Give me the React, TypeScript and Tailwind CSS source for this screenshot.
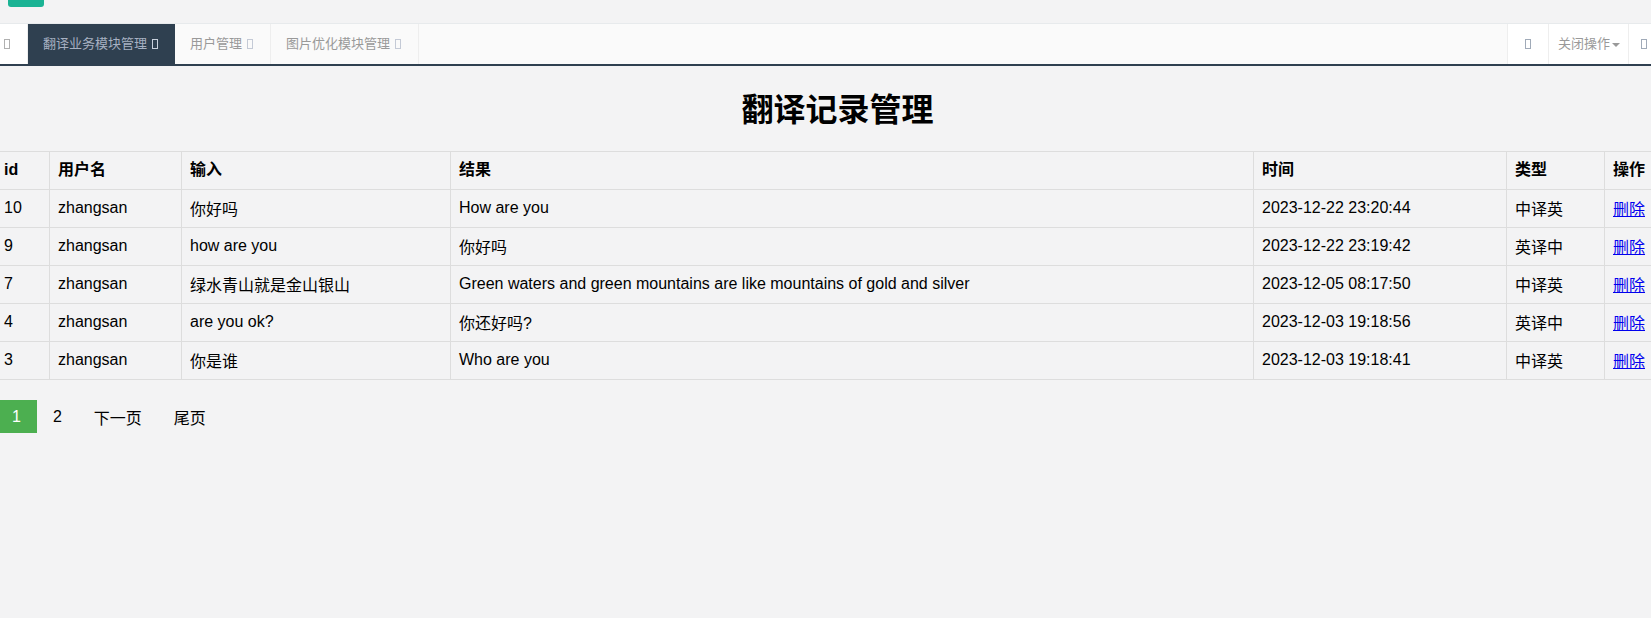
import React from 'react';

const rows = [
  { id: '10', user: 'zhangsan', input: '你好吗', result: 'How are you', time: '2023-12-22 23:20:44', type: '中译英' },
  { id: '9', user: 'zhangsan', input: 'how are you', result: '你好吗', time: '2023-12-22 23:19:42', type: '英译中' },
  { id: '7', user: 'zhangsan', input: '绿水青山就是金山银山', result: 'Green waters and green mountains are like mountains of gold and silver', time: '2023-12-05 08:17:50', type: '中译英' },
  { id: '4', user: 'zhangsan', input: 'are you ok?', result: '你还好吗?', time: '2023-12-03 19:18:56', type: '英译中' },
  { id: '3', user: 'zhangsan', input: '你是谁', result: 'Who are you', time: '2023-12-03 19:18:41', type: '中译英' },
];

const cols = ['w-[54px]', 'w-[132px]', 'w-[269px]', 'w-[803px]', 'w-[253px]', 'w-[98px]', 'flex-1'];

// missing icon-font glyph, drawn as a little box
function Tofu({ className = '' }: { className?: string }) {
  return <span className={`inline-block w-[6px] h-[10px] border ${className}`} />;
}

function Cell({ i, children, bold }: { i: number; children: React.ReactNode; bold?: boolean }) {
  const hasCjk = typeof children === 'string' && /[\u4e00-\u9fff]/.test(children);
  return (
    <div
      className={`${cols[i]} shrink-0 h-full px-2 flex items-center border-r border-[#dddddd] whitespace-nowrap ${
        bold ? 'font-bold pb-[2px]' : ''
      } ${!bold ? (hasCjk ? 'pt-[3px]' : 'pb-[2px]') : ''}`}
    >
      {children}
    </div>
  );
}

export default function App() {
  return (
    <div
      className="min-h-screen bg-[#f3f3f4] text-black overflow-hidden"
      style={{ fontFamily: '"Liberation Sans", "Noto Sans CJK SC", sans-serif' }}
    >
      {/* top strip */}
      <div className="h-[23px] pl-2">
        <div className="w-9 h-[7px] bg-[#1ab394] rounded-b-[3px]" />
      </div>

      {/* tab bar */}
      <div className="h-[41px] flex border-t border-[#e7eaec] bg-[#fafafa] text-[13px] text-[#999999]">
        <div className="w-[28px] bg-white flex items-center pl-[4px] border-r border-[#eeeeee]">
          <Tofu className="border-[#b0b0b0]" />
        </div>
        <div className="flex items-center gap-[5px] pl-[15px] pr-[15px] bg-[#2f4050] text-[#a7b1c2] w-[147px]">
          <span>翻译业务模块管理</span>
          <Tofu className="border-[#c8d0dc]" />
        </div>
        <div className="flex items-center gap-[5px] pl-[15px] pr-[16px] border-r border-[#eeeeee] w-[96px]">
          <span>用户管理</span>
          <Tofu className="border-[#c4cad6]" />
        </div>
        <div className="flex items-center gap-[5px] pl-[15px] pr-[16px] border-r border-[#eeeeee] w-[148px]">
          <span>图片优化模块管理</span>
          <Tofu className="border-[#c4cad6]" />
        </div>
        <div className="flex-1" />
        <div className="w-[41px] flex items-center justify-center border-l border-[#eeeeee] bg-white">
          <Tofu className="border-[#a0aab8]" />
        </div>
        <div className="w-[80px] flex items-center pl-[9px] border-l border-[#eeeeee] bg-white">
          <span>关闭操作</span>
          <span className="ml-[2px] mt-[2px] w-0 h-0 border-l-[4px] border-r-[4px] border-t-[4px] border-l-transparent border-r-transparent border-t-[#999999]" />
        </div>
        <div className="flex-1 max-w-[23px] min-w-[23px] flex items-center pl-[12px] border-l border-[#eeeeee] bg-white">
          <Tofu className="border-[#a0aab8]" />
        </div>
      </div>
      <div className="h-[2px] bg-[#2f4050]" />

      {/* content, the page sits a few px off to the left */}
      <div className="ml-[-4px] w-[1683px]">
        <h1 className="mt-[21px] mb-[18px] h-[46px] leading-[46px] text-[32px] font-bold text-center">翻译记录管理</h1>

        <div className="text-[16px] border-t border-[#dddddd]">
          <div className="flex h-[38px] border-b border-[#dddddd]">
            {['id', '用户名', '输入', '结果', '时间', '类型', '操作'].map((h, i) => (
              <Cell key={h} i={i} bold>
                {h}
              </Cell>
            ))}
          </div>
          {rows.map((r) => (
            <div key={r.id} className="flex h-[38px] border-b border-[#dddddd]">
              <Cell i={0}>{r.id}</Cell>
              <Cell i={1}>{r.user}</Cell>
              <Cell i={2}>{r.input}</Cell>
              <Cell i={3}>{r.result}</Cell>
              <Cell i={4}>{r.time}</Cell>
              <Cell i={5}>{r.type}</Cell>
              <div className="flex-1 h-full px-2 pt-[3px] flex items-center">
                <a href="#" className="text-[#0000ee] underline">
                  删除
                </a>
              </div>
            </div>
          ))}
        </div>

        {/* pagination */}
        <div className="mt-[20px] flex text-[16px]">
          <a href="#" className="h-[33px] px-4 flex items-center bg-[#4caf50] text-white">
            1
          </a>
          <a href="#" className="h-[33px] px-4 flex items-center">
            2
          </a>
          <a href="#" className="h-[33px] px-4 flex items-center pt-[4px]">
            下一页
          </a>
          <a href="#" className="h-[33px] px-4 flex items-center pt-[4px]">
            尾页
          </a>
        </div>
      </div>
    </div>
  );
}
